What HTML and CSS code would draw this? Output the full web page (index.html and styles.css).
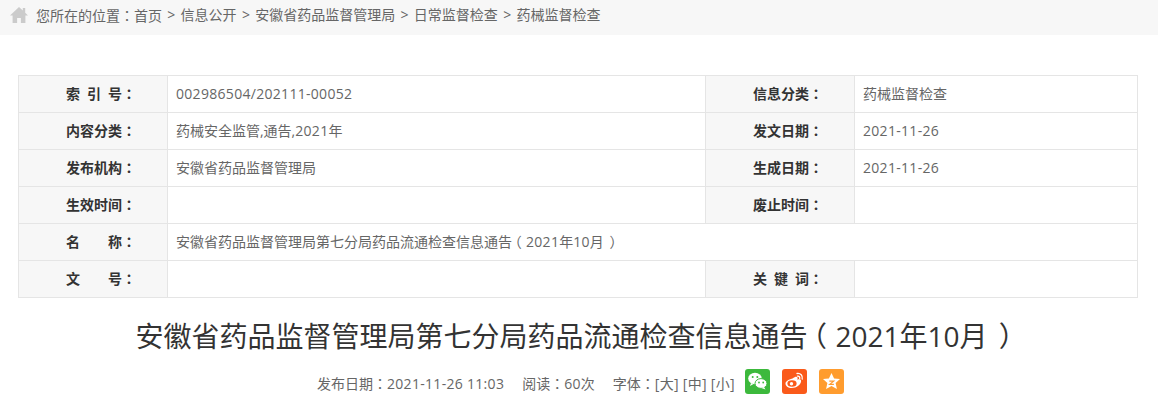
FILE: index.html
```html
<!DOCTYPE html>
<html lang="zh-CN">
<head>
<meta charset="utf-8">
<title>安徽省药品监督管理局第七分局药品流通检查信息通告（2021年10月）</title>
<link rel="stylesheet" href="styles.css">
</head>
<body>
<div class="page">
  <nav class="crumbs">
    <svg class="home" viewBox="0 0 18 16" width="18" height="16"><path fill="#cbcbcb" d="M9 0 0 8.500h2.600V16h4.500v-5h3.800v5h4.500V8.500H18L15.200 5.800V1h-2.400v2.500z"/></svg>
    <span>您所在的位置<b class="pu" lang="zh-TW">：</b>首页</span><i>&gt;</i><span>信息公开</span><i>&gt;</i><span>安徽省药品监督管理局</span><i>&gt;</i><span>日常监督检查</span><i>&gt;</i><span>药械监督检查</span>
  </nav>
  <table class="info">
    <colgroup><col class="c-l"><col class="c-v"><col class="c-l"><col></colgroup>
    <tr><th>索&ensp;引&ensp;号<b class="pu" lang="zh-TW">：</b></th><td><span class="num">002986504/202111-00052</span></td><th>信息分类<b class="pu" lang="zh-TW">：</b></th><td>药械监督检查</td></tr>
    <tr><th>内容分类<b class="pu" lang="zh-TW">：</b></th><td>药械安全监管,通告,<span class="num">2021</span>年</td><th>发文日期<b class="pu" lang="zh-TW">：</b></th><td><span class="num">2021-11-26</span></td></tr>
    <tr><th>发布机构<b class="pu" lang="zh-TW">：</b></th><td>安徽省药品监督管理局</td><th>生成日期<b class="pu" lang="zh-TW">：</b></th><td><span class="num">2021-11-26</span></td></tr>
    <tr><th>生效时间<b class="pu" lang="zh-TW">：</b></th><td></td><th>废止时间<b class="pu" lang="zh-TW">：</b></th><td></td></tr>
    <tr><th>名&emsp;&emsp;称<b class="pu" lang="zh-TW">：</b></th><td colspan="3">安徽省药品监督管理局第七分局药品流通检查信息通告<b class="po">（</b><span class="num">2021</span>年<span class="num">10</span>月<b class="pc">）</b></td></tr>
    <tr><th>文&emsp;&emsp;号<b class="pu" lang="zh-TW">：</b></th><td></td><th>关&ensp;键&ensp;词<b class="pu" lang="zh-TW">：</b></th><td></td></tr>
  </table>
  <h1>安徽省药品监督管理局第七分局药品流通检查信息通告<b class="po">（</b>2021年10月<b class="pc">）</b></h1>
  <div class="meta">
    <span>发布日期<b class="pu" lang="zh-TW">：</b><span class="num">2021-11-26 11:03</span></span>
    <span>阅读<b class="pu" lang="zh-TW">：</b><span class="num">60</span>次</span>
    <span>字体<b class="pu" lang="zh-TW">：</b><span class="num">[大] [中] [小]</span></span>
    <div class="share">
      <a class="ico wx"><svg viewBox="0 0 25 25" width="25" height="25"><ellipse cx="10" cy="9.500" rx="6.800" ry="5.700" fill="#fff"/><path d="M6 14l-1 3 3.500-2z" fill="#fff"/><ellipse cx="16" cy="14.500" rx="6" ry="4.900" fill="#fff" stroke="#3cb93c" stroke-width="1"/><path d="M19 18l1.500 2.500-4-1.500z" fill="#fff"/><circle cx="7.700" cy="8" r="1" fill="#3cb93c"/><circle cx="12.300" cy="8" r="1" fill="#3cb93c"/><circle cx="14" cy="13.500" r=".9" fill="#3cb93c"/><circle cx="18.200" cy="13.500" r=".9" fill="#3cb93c"/></svg></a>
      <a class="ico wb"><svg viewBox="0 0 25 25" width="25" height="25"><path fill="#fff" d="M10.500 9.500c2.500-2 4.500-2.200 5-1 .3.800 0 1.500-.2 2.200 2-.8 3.800-.5 3.800 1.300 0 3.500-4.500 7-9.500 7C6 19 3.500 17 3.500 14.500c0-1.800 2.500-4 7-5z"/><ellipse cx="10" cy="14.500" rx="4.600" ry="3.300" fill="#fa5a1a"/><circle cx="9.500" cy="14.700" r="1.700" fill="#fff"/><path fill="none" stroke="#fff" stroke-width="1.300" stroke-linecap="round" d="M15 4.500c3.500-.6 6 2 5.200 5.500M15.500 7.200c1.700-.3 2.500 1 2.200 2.300"/></svg></a>
      <a class="ico qz"><svg viewBox="0 0 25 25" width="25" height="25"><path fill="#fff" d="M12.500 4l2.600 5.400 5.900.7-4.400 4 1.300 5.900-5.400-3-5.400 3 1.300-5.900-4.400-4 5.900-.7z"/><path fill="none" stroke="#ff9c2e" stroke-width="1.200" d="M10.300 12.200h4.400l-4 3.200h4.200"/></svg></a>
    </div>
  </div>
</div>
</body>
</html>
```
FILE: styles.css
```css
* { box-sizing: border-box; }
html, body { margin: 0; background: #fff; }
body { font-family: "Open Sans", "Noto Sans CJK SC", sans-serif; color: #666; overflow: hidden; }
.pu { font-family: "Noto Sans CJK TC", sans-serif; font-weight: inherit; }
.po, .pc { font-weight: inherit; font-feature-settings: "halt"; }
.po { padding: 0 .3em 0 .2em; }
.pc { padding: 0 .1em 0 .4em; }
.num { letter-spacing: .3px; }
.page { width: 1158px; }
.crumbs { height: 35px; background: #f7f7f7; padding: 5px 0 0 10px; display: flex; align-items: flex-start; font-size: 14px; line-height: 20px; color: #666; }
.crumbs .home { margin: 2px 8px 0 0; flex: none; }
.crumbs i { font-style: normal; margin: 0 5.300px; }
.info { margin: 40px 0 0 18px; width: 1120px; border-collapse: collapse; table-layout: fixed; font-size: 14px; line-height: 20px; }
.c-l { width: 149px; }
.c-v { width: 538px; }
.info tr { height: 37px; }
.info th, .info td { border: 1px solid #e5e5e5; padding: 0 0 1px; }
.info th { background: #f7f7f7; color: #333; text-align: left; font-weight: bold; padding-left: 47px; }
.info td { padding-left: 8px; color: #666; }
h1 { margin: 20px 0 0; padding-right: 7px; font-size: 28px; line-height: 36px; font-weight: normal; color: #333; text-align: center; }
.meta { margin-top: 15px; padding-left: 317px; display: flex; align-items: center; font-size: 14px; line-height: 20px; color: #666; gap: 18px; }
.meta > span { padding-top: 4px; }
.share { display: flex; gap: 12px; margin-left: -8px; }
.ico { display: block; width: 25px; height: 25px; border-radius: 3px; }
.ico svg { display: block; }
.wx { background: #3cb93c; }
.wb { background: #fa5a1a; }
.qz { background: #ff9c2e; }
```
